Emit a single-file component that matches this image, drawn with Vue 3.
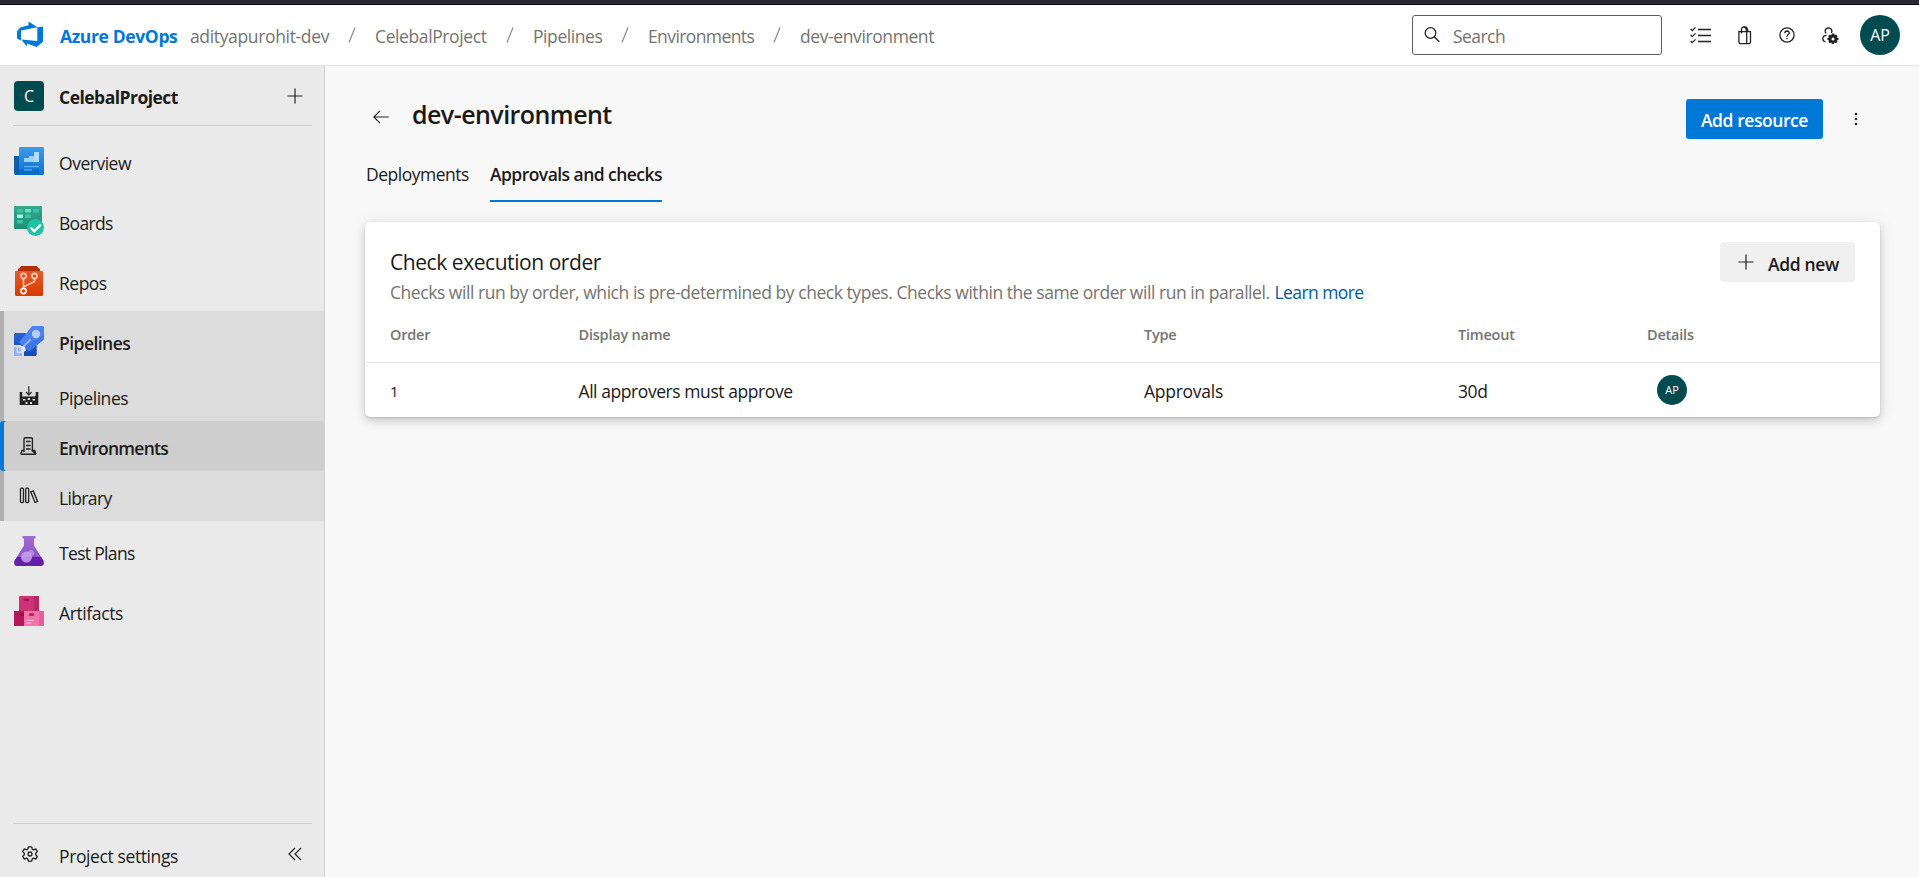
<script setup>
const crumbs = [
  { text: 'CelebalProject', cls: 'c-project' },
  { text: 'Pipelines', cls: 'c-pipelines' },
  { text: 'Environments', cls: 'c-envs' },
  { text: 'dev-environment', cls: 'c-dev' },
]
const columns = ['Order', 'Display name', 'Type', 'Timeout', 'Details']
</script>

<template>
  <div class="page">
    <div class="strip"></div>
    <header class="header">
      <svg class="logo" viewBox="0 0 28 28"><path fill="#0078d7" d="M27 5.500V20.700L20.700 25.900L10.900 22.400V25.800L5.400 18.600L21.300 19.900V6.200ZM21.500 6.300L12.500 .5V4.200L4.200 6.600L1 10.500V17.600L5 19.400V9.400Z"/></svg>
      <span class="brand t">Azure DevOps</span>
      <span class="org t">adityapurohit-dev</span>
      <template v-for="c in crumbs" :key="c.text">
        <svg class="slash" viewBox="0 0 8 16"><path d="M1 15.500L7 .5" stroke="#8a8886" stroke-width="1.200"/></svg>
        <span class="crumb t" :class="c.cls">{{ c.text }}</span>
      </template>
      <div class="search">
        <svg viewBox="0 0 16 16" width="16" height="16" fill="none" stroke="#222" stroke-width="1.300"><circle cx="6.500" cy="6" r="5.300"/><path d="M10.300 9.800L15.300 14.800"/></svg>
        <span class="search-text t">Search</span>
      </div>
      <div class="tools">
        <svg class="i-list" viewBox="0 0 22 18" fill="none" stroke="#222" stroke-width="1.300"><path d="M8 3.500H21M8 9.500H21M8 15.500H21M.7 3L2.300 4.600L5.500 1.400M.7 9L2.300 10.600L5.500 7.400M.7 15L2.300 16.600L5.500 13.400"/></svg>
        <svg class="i-bag" viewBox="0 0 14 19" fill="none" stroke="#222" stroke-width="1.300"><path d="M.9 5.700H12.500V16.300L11.700 17.700H1.700L.9 16.300ZM8.700 5.700V17.500M3.500 7.500V3.500Q3.500 1 5.800 1Q8.300 1 8.500 5.500M6 1Q9.500 .2 10 5.500"/></svg>
        <svg class="i-help" viewBox="0 0 16 16" fill="none" stroke="#222" stroke-width="1.300"><circle cx="8" cy="8" r="7.100"/><path d="M5.800 6.200Q5.900 4 8 4Q10.200 4.100 10.200 6Q10.200 7 9 7.800Q8 8.500 8 9.700M8 10.900V12.300"/></svg>
        <svg class="i-user" viewBox="0 0 17 17" fill="none" stroke="#222" stroke-width="1.300"><path d="M4.300 6.600Q3 5.500 3.100 3.900Q3.500 .9 6.500 .8Q9.500 .9 9.900 3.900Q9.900 5 9.300 5.900M4.500 8.700H3Q.8 9.300 .8 11.700Q.9 14.300 3.500 14.700"/><path fill="#222" stroke="none" d="M9.800 6.500H12.200L12.600 8.100L14.200 7.500L15.600 9.200L14.700 10.400L16.500 11V13L14.800 13.500L15.500 15L13.900 16.300L12.400 15.500L11.900 17H9.900L9.400 15.400L7.800 16.200L6.400 14.700L7.100 13.400L5.400 12.900V10.900L7.100 10.400L6.300 9L7.800 7.500L9.400 8.200Z"/><circle cx="11" cy="12" r="1.500" fill="#fff" stroke="none"/></svg>
      </div>
      <div class="avatar big"><span>AP</span></div>
    </header>

    <div class="body">
      <aside class="side">
        <div class="project">
          <div class="badge">C</div>
          <span class="pname t">CelebalProject</span>
          <svg class="plus" viewBox="0 0 16 16"><path d="M8 .5V15.500M.5 8H15.500" stroke="#222" stroke-width="1.200"/></svg>
        </div>
        <div class="rule"></div>
        <nav>
          <div class="item first">
            <svg class="ic" viewBox="0 0 30 30"><defs><linearGradient id="ov" x1="0" y1="0" x2="0" y2="1"><stop offset="0" stop-color="#3d9ae8"/><stop offset="1" stop-color="#0673d3"/></linearGradient></defs><path fill="#0f5ea5" d="M0 10H6V29H2Q0 29 0 27Z"/><rect x="5" y="1" width="25" height="28" rx="1.200" fill="url(#ov)"/><path fill="#0967bd" d="M5 23H25V29H3Q5 28 5 26Z" opacity=".6"/><path fill="#9bd2ff" d="M10 12H15V10H20V6H25V16H10Z"/><path fill="#c9e6ff" d="M20 6H25V16H20Z" opacity=".5"/><path fill="#5fb2f5" d="M10 20H25V21.300H10ZM10 23.300H18V24.600H10Z"/></svg>
            <span class="t n-ov">Overview</span>
          </div>
          <div class="item">
            <svg class="ic" viewBox="0 0 30 30"><defs><linearGradient id="bd" x1="0" y1="0" x2="0" y2="1"><stop offset="0" stop-color="#37a68e"/><stop offset="1" stop-color="#1d8f78"/></linearGradient></defs><rect width="28" height="23" rx="1" fill="url(#bd)"/><path fill="#36c5a5" d="M3 3H9V6.500H3ZM19 3H25V6.500H19ZM11 8.500H17V12H11ZM3 14H9V17.500H3Z"/><path fill="#64e3c5" d="M11 3H17V6.500H11Z"/><path fill="#a0fae2" d="M3 8.500H9V12H3Z"/><circle cx="21.500" cy="21.500" r="8.500" fill="#1dc3a2"/><path d="M16.500 21.500L20.200 25.200L26.800 18.600" fill="none" stroke="#fff" stroke-width="2.400"/></svg>
            <span class="t n-bd">Boards</span>
          </div>
          <div class="item">
            <svg class="ic" viewBox="0 0 30 30"><defs><linearGradient id="rp" x1="0" y1="0" x2="0" y2="1"><stop offset="0" stop-color="#e35a2b"/><stop offset="1" stop-color="#d93a00"/></linearGradient></defs><path fill="#b62d00" d="M7 0H23L24.500 2.500H26V6H4V2.500H5.500Z"/><path fill="url(#rp)" d="M2 5H28Q29 5 29 6V29Q29 30 28 30H2Q1 30 1 29V6Q1 5 2 5Z"/><g fill="none" stroke="#ffc7b0" stroke-width="1.600"><circle cx="9.500" cy="10" r="2.600"/><circle cx="20.500" cy="10" r="2.600"/><circle cx="9.500" cy="25" r="2.600" stroke="#fff"/><path d="M9.500 12.800V22M20.500 12.700V15.500L9.800 20.800"/></g></svg>
            <span class="t n-rp">Repos</span>
          </div>
          <div class="group">
            <div class="item">
              <svg class="ic" viewBox="0 0 30 30"><defs><linearGradient id="pp" x1="0" y1="0" x2="0" y2="1"><stop offset="0" stop-color="#2d5fd0"/><stop offset="1" stop-color="#1247bd"/></linearGradient></defs><path fill="url(#pp)" d="M0 8.500L1.500 7H11.500L22.700 19V28.500L21.500 30H10V23L6 19H0Z"/><path fill="#4b82ee" d="M6 15L17 1.500L18 0H29L30 1V13L29 14L15 25.500L5 16Z"/><path fill="#3f74df" d="M30 9V13.500L14.500 25.500L9 21Z" opacity=".8"/><circle cx="22" cy="8" r="4.200" fill="#b7cdfb"/><path d="M5.500 24.500L16.500 13.500" stroke="#9cbcff" stroke-width="1.700"/><path fill="#e0e9ff" d="M5 19L11 21L12 25L8 26L6 23Z"/><path fill="#8db0fa" d="M0 21H2.600V27.300H8V30H0ZM4 21.500H6.500V25.500H4Z"/></svg>
              <b class="t n-pb">Pipelines</b>
            </div>
            <div class="sub">
              <svg class="si" viewBox="0 0 20 20"><path fill="#222" d="M.7 6H3.300V11L4 10.500H16V11L16.700 6H19.300V19H.7Z"/><path fill="#dcdcdc" d="M3.300 7H6.500V9.500H3.300ZM8 7H12V9.500H8ZM13.500 7H16.700V9.500H13.500ZM4 13H6.500V14.500H4ZM8.700 12H11V14H8.700ZM13.500 13H16V14.500H13.500ZM6.500 16H8.500V18H6.500ZM11 16H13V18H11Z"/><path d="M9.800 .3V8.500M7 6L9.800 8.800L12.600 6" fill="none" stroke="#222" stroke-width="1.200"/></svg>
              <span class="t n-pl">Pipelines</span>
            </div>
            <div class="sub on">
              <svg class="si" viewBox="0 0 20 20" fill="none" stroke="#222" stroke-width="1.400"><path d="M5 16V3Q5 1.700 6.300 1.700H12Q13.400 1.700 13.400 3V16M1.700 18.300L3 14.500H5.300M13.400 14.500H15.700L17 18.300ZM1.700 18.300H17M7 5.500H11.500M7 9.500H11.500M7 13H11.500"/></svg>
              <b class="t n-en">Environments</b>
            </div>
            <div class="sub">
              <svg class="si" viewBox="0 0 20 20" fill="none" stroke="#222" stroke-width="1.300"><rect x="1.500" y="2.200" width="3" height="14.300" rx="1"/><rect x="6.700" y="2.200" width="3" height="14.300" rx="1"/><path d="M11.700 5.800L14.300 4.900L18.600 15.400L16 16.500Z"/></svg>
              <span class="t n-li">Library</span>
            </div>
          </div>
          <div class="item">
            <svg class="ic" viewBox="0 0 30 30"><defs><linearGradient id="tp" x1="0" y1="0" x2="0" y2="1"><stop offset="0" stop-color="#a06bd4"/><stop offset=".7" stop-color="#8b55c5"/></linearGradient></defs><path fill="url(#tp)" d="M8.500 0H21.500V2.500H20V9.500L29.300 24.500Q31 30 26 30H4Q-1 30 .7 24.500L10 9.500V2.500H8.500Z"/><path fill="#6321ab" d="M3 21H27L29.300 24.500Q31 30 26 30H4Q-1 30 .7 24.500Z"/><circle cx="12.500" cy="21" r="5.500" fill="#c9a2ef" opacity=".85"/><circle cx="17" cy="17" r="3" fill="#c79ceb" opacity=".7"/></svg>
            <span class="t n-tp">Test Plans</span>
          </div>
          <div class="item">
            <svg class="ic" viewBox="0 0 30 30"><path fill="#cf3274" d="M5 1Q5 0 6 0H24Q25 0 25 1V15H5Z"/><path fill="#b92765" d="M20 0H24Q25 0 25 1V15H20Z"/><rect x="9.500" y="2.800" width="5.500" height="2.200" rx="1" fill="#9b1450"/><path fill="#b3185c" d="M0 15H10V30H1Q0 30 0 29Z"/><path fill="#f075a8" d="M10 15H30V29Q30 30 29 30H10Z"/><path fill="#e65f96" d="M25 15H30V29Q30 30 29 30H25Z"/><rect x="5" y="17.500" width="5" height="2.200" fill="#8a0d46"/><rect x="15" y="17.300" width="5" height="2.600" rx="1" fill="#b81e60"/><path fill="#f9b4d0" d="M12.500 23.700H20V24.900H12.500ZM12.500 26.500H17V27.700H12.500Z"/></svg>
            <span class="t n-ar">Artifacts</span>
          </div>
        </nav>
        <div class="foot">
          <div class="rule"></div>
          <div class="settings">
            <svg class="gear" viewBox="0 0 16 16" fill="none" stroke="#222" stroke-width="1.300" stroke-linejoin="round"><path d="M6.300 .9H9.700L10.200 3.100L11.600 3.800L13.700 2.900L15.300 5.600L13.700 7.200V8.800L15.300 10.400L13.700 13.100L11.600 12.200L10.200 12.900L9.700 15.100H6.300L5.800 12.900L4.400 12.200L2.300 13.100L.7 10.400L2.300 8.800V7.200L.7 5.600L2.300 2.900L4.400 3.800L5.800 3.100Z"/><circle cx="8" cy="8" r="2"/></svg>
            <span class="t n-ps">Project settings</span>
            <svg class="chev" viewBox="0 0 14 14" fill="none" stroke="#222" stroke-width="1.200"><path d="M7 1L1 7L7 13M13 1L7 7L13 13"/></svg>
          </div>
        </div>
      </aside>

      <main class="main">
        <div class="titlebar">
          <svg class="back" viewBox="0 0 16 14" fill="none" stroke="#222" stroke-width="1.200"><path d="M.8 7H15.800M7 .8L.8 7L7 13.200"/></svg>
          <h1 class="t">dev-environment</h1>
          <button class="primary"><span class="t">Add resource</span></button>
          <svg class="dots" viewBox="0 0 4 14" fill="#222"><circle cx="2" cy="2" r="1.300"/><circle cx="2" cy="7" r="1.300"/><circle cx="2" cy="12" r="1.300"/></svg>
        </div>
        <div class="tabs">
          <span class="tab"><span class="t tb1">Deployments</span></span>
          <span class="tab active"><span class="t tb2">Approvals and checks</span></span>
        </div>
        <section class="card">
          <div class="card-head">
            <div>
              <h2 class="t">Check execution order</h2>
              <p><span class="t desc">Checks will run by order, which is pre-determined by check types. Checks within the same order will run in parallel.</span><a class="t">Learn more</a></p>
            </div>
            <button class="addnew">
              <svg class="plus" viewBox="0 0 16 16"><path d="M8 .5V15.500M.5 8H15.500" stroke="#222" stroke-width="1.200"/></svg>
              <span class="t">Add new</span>
            </button>
          </div>
          <div class="grid heads"><span v-for="c in columns" :key="c" class="t">{{ c }}</span></div>
          <div class="grid row">
            <span class="num t">1</span><span class="t r1">All approvers must approve</span><span class="t r2">Approvals</span><span class="t r3">30d</span>
            <div class="avatar small"><span>AP</span></div>
          </div>
        </section>
      </main>
    </div>
  </div>
</template>

<style>
html, body { margin: 0; }
</style>
<style scoped>
* { box-sizing: border-box; }
.page { width: 1919px; height: 877px; overflow: hidden; display: flex; flex-direction: column; background: #f8f8f8; color: #1b1a19; font: 17.5px/24px "Open Sans", "Noto Sans", sans-serif; }
h1, h2, p { margin: 0; font-weight: 400; }
.t { white-space: nowrap; }
.strip { height: 5px; flex: none; background: #2b2a33; border-bottom: 1px solid #0c0c0f; }
.header { height: 61px; flex: none; background: #fff; border-bottom: 1px solid #e3e3e3; display: flex; align-items: center; color: #75736f; padding: 0 19px 0 16px; }
.header .t { padding-top: 2px; }
.logo { width: 28px; height: 28px; margin-right: 16px; }
.brand { font-weight: 700; color: #0078d7; width: 130px; letter-spacing: -.37px; }
.org { width: 158px; letter-spacing: -.35px; }
.slash { width: 8px; height: 16px; margin-right: 19px; }
.crumb { flex: none; }
.c-project { width: 131px; letter-spacing: -.39px; }
.c-pipelines { width: 88px; letter-spacing: -.42px; }
.c-envs { width: 125px; letter-spacing: -.6px; }
.c-dev { letter-spacing: -.4px; }
.search { margin-left: auto; width: 250px; height: 40px; border: 1px solid #605e5c; border-radius: 3px; display: flex; align-items: center; padding-left: 11px; gap: 13px; }
.search-text { letter-spacing: -.55px; }
.tools { display: flex; align-items: center; width: 198px; padding-left: 28px; }
.i-list { width: 22px; height: 18px; margin-right: 26px; }
.i-bag { width: 14px; height: 19px; margin-right: 27px; }
.i-help { width: 16px; height: 16px; margin-right: 27px; }
.i-user { width: 17px; height: 17px; }
.avatar { border-radius: 50%; background: #004b50; color: #fff; display: flex; align-items: center; justify-content: center; }
.big { width: 40px; height: 40px; font-size: 16px; }
.small { width: 30px; height: 30px; font-size: 11px; margin-left: 10px; }
.body { flex: 1; display: flex; min-height: 0; }
.side { width: 325px; background: #eaeaea; border-right: 1px solid #cfcfcf; display: flex; flex-direction: column; }
.project { height: 59px; padding: 0 21px 0 14px; display: flex; align-items: center; }
.badge { width: 30px; height: 30px; border-radius: 4px; background: #004b50; color: #fff; text-align: center; line-height: 30px; font-size: 16px; margin-right: 15px; }
.pname { font-weight: 700; letter-spacing: -.52px; padding-top: 2px; }
.project .plus { margin-left: auto; }
.plus { width: 16px; height: 16px; }
.rule { height: 1px; background: #d0d0d0; margin: 0 12px 0 13px; }
nav { padding-top: 5px; }
.item { height: 60px; display: flex; align-items: center; padding-left: 14px; }
.item .t, .sub .t, .settings .t { padding-top: 3px; }
.n-ov { letter-spacing: -.48px; }
.n-bd { letter-spacing: -.7px; }
.n-rp { letter-spacing: -.5px; }
.n-pb { letter-spacing: -.55px; }
.n-pl { letter-spacing: -.45px; }
.n-en { letter-spacing: -.73px; }
.n-li { letter-spacing: -.65px; }
.n-tp { letter-spacing: -.67px; }
.n-ar { letter-spacing: -.38px; }
.n-ps { letter-spacing: -.39px; }
.ic { width: 30px; height: 30px; margin-right: 15px; }
.group { background: #dcdcdc; box-shadow: inset 4px 0 #b0b0b0; }
.group b { font-weight: 600; }
.sub { height: 50px; display: flex; align-items: center; padding-left: 20px; }
.si { width: 20px; height: 20px; margin: 0 20px 0 -1px; }
.on { background: #cecece; border-radius: 3px; box-shadow: inset 4px 0 #0078d4; }
.foot { margin-top: auto; }
.settings { height: 53px; display: flex; align-items: center; padding: 7px 22px 0 22px; }
.gear { width: 16px; height: 16px; margin-right: 21px; }
.chev { width: 14px; height: 14px; margin-left: auto; }
.main { flex: 1; padding: 33px 39px 0 40px; }
.titlebar { display: flex; align-items: center; height: 40px; padding-left: 8px; }
.back { width: 16px; height: 14px; margin: 0 23px 4px 0; }
h1 { font-size: 25px; font-weight: 600; line-height: 34px; padding-bottom: 11px; letter-spacing: -.55px; }
button { font: 600 17.5px/24px "Open Sans", "Noto Sans", sans-serif; border: 0; border-radius: 3px; height: 40px; padding: 0; display: flex; align-items: center; justify-content: center; }
.primary { margin-left: auto; width: 137px; background: #0078d7; color: #fff; letter-spacing: -.43px; }
.primary .t { padding-top: 1px; }
.dots { width: 4px; height: 14px; margin: 0 22px 0 31px; }
.tabs { display: flex; gap: 22px; height: 63px; }
.tab { padding-top: 23px; height: 63px; }
.tab:first-child { padding-left: 1px; width: 103px; }
.tb1 { letter-spacing: -.5px; }
.active { font-weight: 600; border-bottom: 2px solid #0078d4; letter-spacing: -.545px; }
.card { margin-top: 20px; height: 195px; background: #fff; border-radius: 5px; box-shadow: 0 4px 9px rgba(0,0,0,.15), 0 1px 18px rgba(0,0,0,.08), 0 1px 2px rgba(0,0,0,.12); }
.card-head { display: flex; justify-content: space-between; height: 95px; padding: 20px 25px 0; }
h2 { font-size: 21px; line-height: 30px; padding-top: 5px; letter-spacing: -.44px; }
p { color: #75736f; padding-top: 3px; }
.desc { letter-spacing: -.453px; }
a { color: #005a9e; margin-left: 5px; letter-spacing: -.58px; }
.addnew { width: 135px; background: #f0f0f0; color: #1b1a19; gap: 14px; padding-left: 2px; letter-spacing: -.35px; }
.addnew .t { padding-top: 3px; }
.grid { display: grid; grid-template-columns: 188.5px 565.5px 314px 189px 1fr; padding-left: 25px; }
.heads { height: 46px; border-bottom: 1px solid #eaeaea; font-size: 14.5px; font-weight: 600; color: #75736f; padding-top: 6px; letter-spacing: -.22px; }
.row { height: 54px; align-items: center; }
.row .t { padding-top: 2px; }
.r1 { letter-spacing: -.43px; }
.r2 { letter-spacing: -.27px; }
.r3 { letter-spacing: -.4px; }
.num { font-size: 15px; }
</style>
